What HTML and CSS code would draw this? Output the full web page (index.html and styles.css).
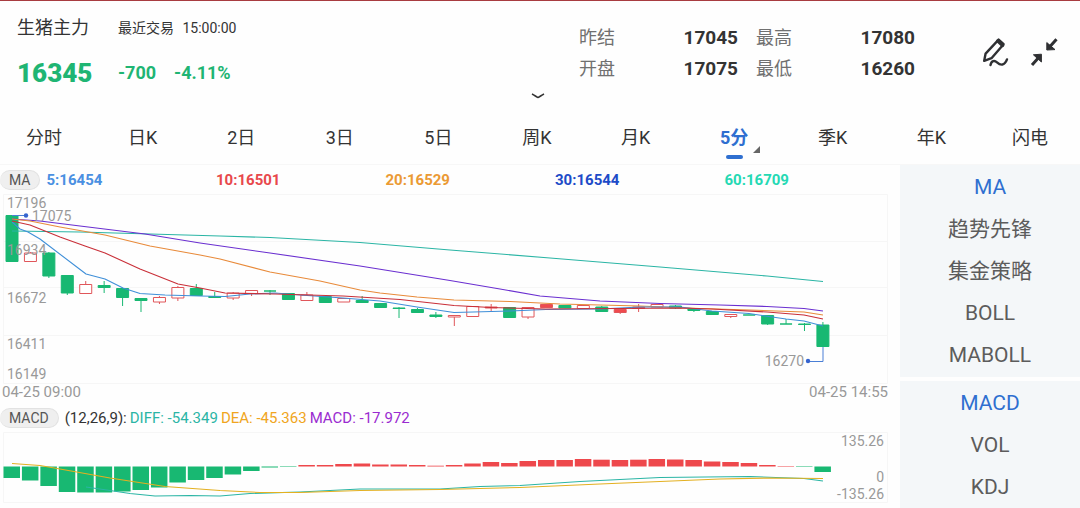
FILE: index.html
```html
<!DOCTYPE html>
<html lang="zh-CN">
<head>
<meta charset="utf-8">
<meta name="viewport" content="width=device-width, initial-scale=1">
<title>生猪主力</title>
<link rel="stylesheet" href="styles.css">
</head>
<body>
<header class="header">
  <div class="summary">
    <div class="quote">
      <div class="quote-title">
        <h1 class="name">生猪主力</h1>
        <p class="traded">最近交易 <time>15:00:00</time></p>
      </div>
      <div class="quote-price">
        <strong class="price">16345</strong>
        <span class="change">-700</span>
        <span class="change">-4.11%</span>
      </div>
    </div>
    <dl class="stats">
      <div class="stat"><dt>昨结</dt><dd>17045</dd></div>
      <div class="stat"><dt>最高</dt><dd>17080</dd></div>
      <div class="stat"><dt>开盘</dt><dd>17075</dd></div>
      <div class="stat"><dt>最低</dt><dd>16260</dd></div>
    </dl>
    <div class="tools">
      <button class="icon-button" type="button" aria-label="画线">
        <svg width="32" height="32" viewBox="0 0 32 32" fill="none" stroke="#2f3033" stroke-width="2.4" stroke-linejoin="round" stroke-linecap="round">
          <path d="M18.6 3.6 L23.6 8.2 L11.5 22.2 L4.2 24.8 L5.6 17.6 Z"/>
          <path d="M17.8 5 L22.6 9.4" stroke-width="3.4"/>
          <path d="M10.5 29 C11.5 24.5 14.5 24.2 17 26.3 C20.5 29.5 24.5 30 27 23.4"/>
        </svg>
      </button>
      <button class="icon-button" type="button" aria-label="退出全屏">
        <svg width="32" height="32" viewBox="0 0 32 32" fill="#2f3033" stroke="#2f3033" stroke-linejoin="round">
          <path d="M28.5 3.2 L22 10.5 M4 29 L10.5 21.7" stroke-width="3" fill="none"/>
          <path d="M18.8 6.6 L18.8 14 L27 13.6 Z M13.4 18.2 L13.4 26 L5.4 18.8 Z" stroke-width="1"/>
        </svg>
      </button>
    </div>
  </div>
  <button class="expand" type="button" aria-label="展开">
    <svg width="14" height="8" viewBox="0 0 14 8" fill="none" stroke="#333" stroke-width="1.6"><path d="M1 2 C4 3.5 5.5 5 7 5.4 C8.500 5 10 3.500 13 2"/></svg>
  </button>
</header>

<nav class="periods">
  <button class="period" type="button">分时</button>
  <button class="period" type="button">日K</button>
  <button class="period" type="button">2日</button>
  <button class="period" type="button">3日</button>
  <button class="period" type="button">5日</button>
  <button class="period" type="button">周K</button>
  <button class="period" type="button">月K</button>
  <button class="period period-active" type="button">5分</button>
  <button class="period" type="button">季K</button>
  <button class="period" type="button">年K</button>
  <button class="period" type="button">闪电</button>
</nav>

<main class="main">
  <section class="charts">
    <div class="legend">
      <button class="pill" type="button">MA</button>
      <div class="averages">
        <span class="ma5">5:16454</span>
        <span class="ma10">10:16501</span>
        <span class="ma20">20:16529</span>
        <span class="ma30">30:16544</span>
        <span class="ma60">60:16709</span>
      </div>
    </div>
    <svg class="plot" viewBox="0 192 900 208" role="img" aria-label="K线图">
      <path class="grid" d="M3.500 194.500H887.500V383.500H3.500ZM3 241.500H887M3 287.500H887M3 335.500H887"/>
      <g id="candles"></g>
      <g id="averages"></g>
      <path class="marker" d="M12 215.500H26M823 347V361.500H808"/>
      <circle class="dot" cx="26" cy="215.500" r="2.200"/>
      <circle class="dot" cx="808" cy="361" r="2.200"/>
      <g class="axis">
        <text x="7" y="208">17196</text>
        <text x="32" y="221">17075</text>
        <text x="7" y="255">16934</text>
        <text x="7" y="303">16672</text>
        <text x="7" y="349">16411</text>
        <text x="7" y="379">16149</text>
        <text x="804" y="366" text-anchor="end">16270</text>
        <text class="date" x="2" y="397">04-25 09:00</text>
        <text class="date" x="888" y="397" text-anchor="end">04-25 14:55</text>
      </g>
    </svg>
    <div class="legend legend-macd">
      <button class="pill" type="button">MACD</button>
      <div class="macd-values">
        <span>(12,26,9):</span>
        <span class="diff">DIFF: -54.349</span>
        <span class="dea">DEA: -45.363</span>
        <span class="macd">MACD: -17.972</span>
      </div>
    </div>
    <svg class="plot" viewBox="0 430 900 78" role="img" aria-label="MACD">
      <path class="grid" d="M3.500 432.500H887.500V502.500H3.500Z"/>
      <g id="bars"></g>
      <g id="signals"></g>
      <g class="axis" text-anchor="end">
        <text x="884" y="446">135.26</text>
        <text x="884" y="482">0</text>
        <text x="884" y="499">-135.26</text>
      </g>
    </svg>
  </section>

  <aside class="sidebar">
    <div class="panel">
      <button class="indicator indicator-active" type="button">MA</button>
      <button class="indicator" type="button">趋势先锋</button>
      <button class="indicator" type="button">集金策略</button>
      <button class="indicator" type="button">BOLL</button>
      <button class="indicator" type="button">MABOLL</button>
    </div>
    <div class="panel">
      <button class="indicator indicator-active" type="button">MACD</button>
      <button class="indicator" type="button">VOL</button>
      <button class="indicator" type="button">KDJ</button>
    </div>
  </aside>
</main>
<script src="chart.js"></script>
</body>
</html>
```

FILE: styles.css
```css
* {
  box-sizing: border-box;
}

body {
  margin: 0;
  background: #fefefe;
  color: #333;
  font-family: Roboto, "Noto Sans CJK SC", sans-serif;
  font-size: 18px;
  line-height: 24px;
}

button {
  margin: 0;
  padding: 0;
  border: 0;
  background: none;
  color: inherit;
  font: inherit;
  cursor: pointer;
}

svg {
  display: block;
}

h1, p, dl, dd {
  margin: 0;
}

.header {
  border-top: 1px solid #a83c40;
}

.summary {
  display: flex;
  align-items: flex-start;
  padding: 15px 20px 0 17px;
}

.quote {
  flex: 1;
}

.quote-title,
.quote-price {
  display: grid;
  grid-template-columns: 83px auto auto;
  justify-content: start;
  column-gap: 18px;
  align-items: center;
}

.quote-price {
  margin-top: 17px;
  color: #1fb573;
  font-weight: 700;
}

.name {
  font-size: 18px;
  font-weight: 400;
}

.traded {
  font-size: 14px;
  white-space: pre;
}

.traded time {
  margin-left: 5px;
}

.price {
  font-size: 26px;
  line-height: 32px;
}

.change {
  font-size: 18px;
}

.stats {
  display: grid;
  grid-template-columns: 1fr 1fr;
  gap: 7px 18px;
  width: 336px;
  margin: 10px 65px 0 0;
}

.stat {
  display: flex;
  justify-content: space-between;
}

.stat dt {
  color: #707070;
}

.stat dd {
  font-size: 19px;
  font-weight: 700;
}

.tools {
  display: flex;
  gap: 16px;
  margin-top: 20px;
}

.expand {
  display: block;
  margin: 3px auto 0;
  padding: 0 4px 15px 0;
}

.periods {
  display: flex;
  justify-content: space-between;
  padding: 11px 32px 14px 26px;
  border-bottom: 1px solid #f7f7f7;
}

.period {
  position: relative;
  width: 36px;
  white-space: nowrap;
}

.period-active {
  color: #2f6fd0;
  font-weight: 700;
}

.period-active::before {
  content: "";
  position: absolute;
  left: 10px;
  bottom: -9px;
  width: 17px;
  height: 4px;
  border-radius: 2px;
  background: #2f6fd0;
}

.period-active::after {
  content: "";
  position: absolute;
  right: -8px;
  bottom: -3px;
  border-bottom: 7px solid #666;
  border-left: 7px solid transparent;
}

.main {
  display: grid;
  grid-template-columns: 5fr 1fr;
}

.legend {
  display: flex;
  align-items: center;
  height: 27px;
  padding-top: 2px;
  font-size: 15px;
}

.legend-macd {
  height: 30px;
  padding-top: 6px;
}

.pill {
  height: 20px;
  padding: 0 9px;
  border: 1px solid #e2e2e2;
  border-left: 0;
  border-radius: 10px;
  background: #efefef;
  color: #555;
  font-size: 14px;
  line-height: 18px;
}

.averages {
  display: grid;
  flex: 1;
  grid-template-columns: repeat(5, 1fr);
  padding: 0 6px 0 6px;
  font-weight: 700;
}

.macd-values {
  display: flex;
  gap: 3px;
  margin-left: 6px;
}

.ma5 { color: #4a90e2; }
.ma10 { color: #e8484c; }
.ma20 { color: #eb9a34; }
.ma30 { color: #1d4bc8; }
.ma60 { color: #25d9b4; }
.diff { color: #2bb5a5; }
.dea { color: #f0a520; }
.macd { color: #9a2bd0; }

.plot {
  width: 100%;
  height: auto;
}

.grid {
  fill: none;
  stroke: #f6f6f6;
}

.axis {
  fill: #999;
  font-size: 14px;
}

.date {
  font-size: 15px;
}

.marker {
  fill: none;
  stroke: #4a7fd6;
}

.dot {
  fill: #3564cf;
}

.line {
  fill: none;
  stroke-width: 1.1;
  stroke-linejoin: round;
}

.fall {
  fill: #18b872;
  stroke: #18b872;
}

.rise {
  fill: #f04a4e;
  stroke: #e0565a;
}

.hollow {
  fill: #fff;
  stroke: #e0565a;
}

.bar-fall {
  fill: #18b872;
}

.bar-rise {
  fill: #ee484c;
}

.sidebar {
  display: flex;
  flex-direction: column;
  gap: 4px;
}

.panel {
  display: flex;
  flex-direction: column;
  padding: 1px 0;
  background: #f4f7f9;
}

.panel:last-child {
  flex: 1;
  padding-bottom: 0;
}

.indicator {
  height: 42px;
  color: #5c5c5c;
  font-size: 21px;
}

.indicator-active {
  color: #2f6fd0;
}
```

FILE: chart.js
```js
const NS = "http://www.w3.org/2000/svg";
const FIRST_X = 12;
const STEP = 18.43;
const ZERO = 466.5;

// kind (g: fall, r: rise filled, h: rise hollow), body top, body bottom, wick top, wick bottom
const candles = [
  ["g", 215.5, 261.5, 215, 262], ["h", 253, 261.5, 252, 262], ["g", 253, 276, 252, 278],
  ["g", 275.5, 293, 275, 295], ["h", 284.5, 293.5, 281, 294], ["g", 285.5, 287.5, 281, 293],
  ["g", 288.5, 297.5, 288, 306], ["g", 298.5, 300.5, 298, 312], ["h", 297.5, 302, 296, 304],
  ["h", 287.5, 298, 286, 301], ["g", 288.5, 295.5, 284, 296], ["g", 296.5, 297.5, 292, 298],
  ["h", 293, 298, 292, 300], ["h", 290.5, 293.5, 290, 296], ["g", 291, 291, 290, 295],
  ["g", 293.5, 299.5, 293, 300], ["h", 295, 300.5, 292, 301], ["g", 296.5, 302.5, 296, 303],
  ["h", 298.5, 302, 298, 302], ["g", 300.5, 302.5, 296, 303], ["g", 303.5, 307.5, 303, 308],
  ["g", 308, 308.5, 307, 318], ["g", 309.5, 312.5, 308, 313], ["g", 315, 316.5, 312, 318],
  ["h", 315.5, 317, 315, 326], ["h", 306.5, 316.5, 306, 317], ["r", 307, 308, 304, 312],
  ["g", 307.5, 317.5, 307, 318], ["h", 307.5, 317, 307, 319], ["r", 304.5, 307.5, 304, 308],
  ["g", 305.5, 308, 305, 308], ["h", 305.5, 308.5, 305, 309], ["g", 307, 311.5, 306, 312],
  ["r", 309.5, 312.5, 309, 314], ["r", 307, 308.5, 304, 312], ["h", 304.5, 307, 304, 307],
  ["g", 306, 308, 305, 309], ["g", 309, 310.5, 308, 312], ["g", 311.5, 314.5, 311, 315],
  ["h", 314.5, 316.5, 314, 318], ["g", 315, 315, 315, 315], ["g", 315.5, 324, 315, 325],
  ["g", 324, 324, 319, 324], ["g", 324, 324.5, 323, 331], ["g", 325, 346.5, 322, 347]
];

const averages = [
  ["#2bb5a5", "12,231 80,232 150,234 220,236 270,237.5 360,242.5 450,250 550,258 660,267 767,276 823,281.5"],
  ["#6a2fd0", "12,219 40,221 80,226 145,234 200,243 270,253 360,266 450,280.5 500,289 540,296 600,301 660,303.5 720,305 767,306.5 804,308.5 823,311"],
  ["#e88a3a", "12,219 30,221 60,227 105,235 150,246 200,255 220,259 270,272 320,281 360,290 380,293 417,297 454,300 510,301.5 560,304 640,306 700,308.5 750,310 804,312 823,315"],
  ["#3f8fd8", "12,222 20,229 28,232 40,239 86,274 105,279 123,288 140,293.5 165,295 200,296 225,296.5 250,294 275,293 300,295 343,298 380,301 417,307 454,312.5 473,312 510,311 546,309.5 600,309 640,307 680,307 712,311 749,313.5 786,319 804,321 823,326"],
  ["#c92f38", "12,221 30,225 60,237 85,246 105,253 140,269 178,284 200,288 225,293 275,294 343,296 400,299.5 454,305.5 491,307.5 546,309 620,308.5 680,308 712,309 767,312 804,315 823,319"]
];

// far edge of each histogram bar
const bars = [
  478, 480.5, 486, 492, 492.5, 492.5, 491.5, 490, 487.5, 482.5, 480, 478, 474.5, 471, 467.5,
  467, 465, 465, 464, 463.5, 464.5, 464.5, 465, 465.7, 465, 463.5, 462, 463, 461, 460,
  460, 459, 459.7, 460, 459.7, 459, 459.5, 460, 461.5, 462, 463, 465, 466, 467, 472
];

const signals = [
  ["#2bb5a5", "86,487 110,490.5 130,493.5 155,496 190,495.5 220,496 250,493.5 300,492 360,489 440,489 480,486.5 520,485.5 580,481.5 660,477.5 750,476.5 804,478.5 823,481"],
  ["#e3b021", "12,463.5 40,465.5 60,469 110,478 165,486.5 220,490.5 260,492.5 300,492.5 360,490.5 440,489.5 520,487.5 600,484 660,481.5 720,479 770,478 823,478.5"]
];

function add(parent, name, attributes) {
  const node = document.createElementNS(NS, name);
  Object.entries(attributes).forEach(([key, value]) => node.setAttribute(key, value));
  document.getElementById(parent).appendChild(node);
}

const kinds = { g: "fall", r: "rise", h: "hollow" };

candles.forEach(([kind, top, bottom, high, low], i) => {
  const x = FIRST_X + i * STEP;
  add("candles", "path", { class: kinds[kind], d: `M${x} ${high}V${low}` });
  add("candles", "path", {
    class: kinds[kind],
    d: `M${x - 6} ${top}H${x + 6}V${bottom}H${x - 6}Z`
  });
});

bars.forEach((edge, i) => {
  add("bars", "rect", {
    class: edge > ZERO ? "bar-fall" : "bar-rise",
    x: FIRST_X - 8.5 + i * STEP,
    y: Math.min(edge, ZERO),
    width: 16.5,
    height: Math.abs(edge - ZERO)
  });
});

averages.forEach(([stroke, points]) => add("averages", "polyline", { class: "line", stroke, points }));
signals.forEach(([stroke, points]) => add("signals", "polyline", { class: "line", stroke, points }));
```
